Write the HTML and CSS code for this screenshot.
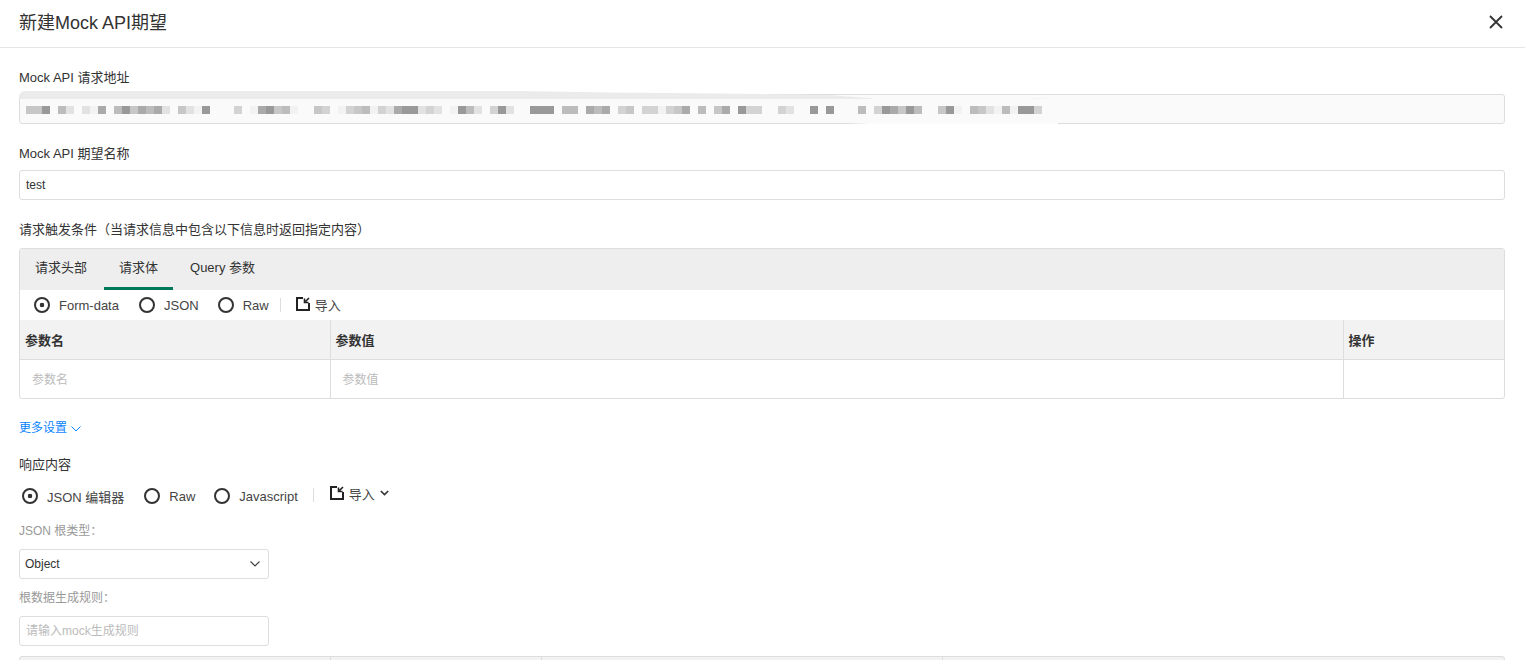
FILE: index.html
```html
<!DOCTYPE html>
<html lang="zh-CN">
<head>
    <meta charset="UTF-8">
    <meta name="viewport" content="width=device-width, initial-scale=1.0">
    <title>新建Mock API期望</title>
    <link rel="stylesheet" href="styles.css">
</head>
<body>
    <header class="modal-header">
        <h1 class="modal-title">新建Mock API期望</h1>
        <svg class="close-icon" width="14" height="14" viewBox="0 0 14 14"><path d="M1 1l12 12M13 1L1 13"/></svg>
    </header>

    <main class="modal-body">
        <label class="field-label">Mock API 请求地址</label>
        <div class="url-box">
            <div class="mosaic">
                <i class="d"></i><i class="d"></i><i class="g"></i><i></i><i class="e"></i><i class="b"></i><i></i><i class="b"></i><i class="a"></i><i class="f"></i><i></i><i class="e"></i><i class="g"></i><i class="d"></i><i class="f"></i><i class="e"></i><i class="f"></i><i class="b"></i><i></i><i class="d"></i><i class="b"></i><i class="a"></i><i class="g"></i><i></i><i></i><i></i><i class="c"></i><i></i><i class="a"></i><i class="f"></i><i class="g"></i><i class="d"></i><i class="e"></i><i class="a"></i><i></i><i></i>
                <i class="d"></i><i class="c"></i><i></i><i class="a"></i><i class="c"></i><i class="d"></i><i class="e"></i><i class="a"></i><i class="c"></i><i class="b"></i><i class="f"></i><i class="g"></i><i class="g"></i><i class="b"></i><i class="c"></i><i class="b"></i><i></i><i class="a"></i><i class="g"></i><i class="e"></i><i class="b"></i><i></i><i class="c"></i><i class="g"></i><i class="b"></i><i></i><i></i><i class="g"></i><i class="g"></i><i class="g"></i><i></i>
                <i class="e"></i><i class="e"></i><i></i><i class="f"></i><i class="e"></i><i class="f"></i><i></i><i class="c"></i><i class="d"></i><i></i><i class="c"></i><i class="c"></i><i class="a"></i><i class="c"></i><i class="d"></i><i class="f"></i><i></i><i class="e"></i><i></i><i class="d"></i><i class="f"></i><i></i><i class="g"></i><i class="c"></i><i class="c"></i><i></i><i></i><i class="c"></i><i class="b"></i><i></i><i></i><i class="g"></i><i></i><i class="g"></i>
                <i></i><i></i><i></i><i class="e"></i><i></i><i class="c"></i><i class="g"></i><i class="f"></i><i class="d"></i><i class="g"></i><i class="e"></i><i></i><i></i><i class="d"></i><i class="g"></i><i class="a"></i><i></i><i class="e"></i><i class="d"></i><i class="b"></i><i class="a"></i><i class="e"></i><i class="a"></i><i class="g"></i><i class="g"></i><i class="c"></i>
            </div>
            <svg class="url-smear" width="1100" height="36" viewBox="0 0 1100 36">
                <path class="smear-band" d="M0 9Q0 1 6 1H500L590 2.500 700 3.500 810 5 854 8.500V9Z"/>
                <path class="smear-white" d="M818 34.500H1039V33H850Z"/>
                <path class="smear-faint" d="M1008 8.500Q1018 7.500 1029 8.500Q1018 9 1008 8.500Z"/>
            </svg>
        </div>

        <label class="field-label">Mock API 期望名称</label>
        <input class="text-input" type="text" value="test">

        <label class="field-label panel-label">请求触发条件（当请求信息中包含以下信息时返回指定内容）</label>
        <section class="panel">
            <nav class="tabs">
                <a class="tab">请求头部</a>
                <a class="tab active">请求体</a>
                <a class="tab">Query 参数</a>
            </nav>
            <div class="radio-row">
                <span class="radio checked">Form-data</span>
                <span class="radio">JSON</span>
                <span class="radio">Raw</span>
                <span class="divider"></span>
                <span class="import">
                    <svg class="import-icon" width="14" height="14" viewBox="0 0 14 14"><path d="M7 1H1v12h12V6"/><path class="arrow" d="M8.500 1.500v4h4M9.500 4.500L13 1"/></svg>
                    导入
                </span>
            </div>
            <table class="params">
                <thead>
                    <tr><th class="col-name">参数名</th><th>参数值</th><th class="col-op">操作</th></tr>
                </thead>
                <tbody>
                    <tr><td class="ph">参数名</td><td class="ph">参数值</td><td></td></tr>
                </tbody>
            </table>
        </section>

        <a class="more-link">更多设置
            <svg width="10" height="6" viewBox="0 0 10 6"><path d="M.5.500L5 5 9.500.500"/></svg>
        </a>

        <label class="field-label response-label">响应内容</label>
        <div class="radio-row response-row">
            <span class="radio checked">JSON 编辑器</span>
            <span class="radio">Raw</span>
            <span class="radio">Javascript</span>
            <span class="divider"></span>
            <span class="import import-menu">
                <svg class="import-icon" width="14" height="14" viewBox="0 0 14 14"><path d="M7 1H1v12h12V6"/><path class="arrow" d="M8.500 1.500v4h4M9.500 4.500L13 1"/></svg>
                导入
                <svg class="menu-caret" width="9" height="6" viewBox="0 0 9 6"><path d="M.8 1L4.500 4.600 8.200 1"/></svg>
            </span>
        </div>

        <label class="sub-label">JSON 根类型：</label>
        <div class="select-box">
            Object
            <svg width="10" height="6" viewBox="0 0 10 6"><path d="M.5.500L5 5 9.500.500"/></svg>
        </div>

        <label class="sub-label">根数据生成规则：</label>
        <input class="text-input rule-input" type="text" placeholder="请输入mock生成规则">

        <div class="next-table">
            <span></span><span></span><span></span><span></span>
        </div>
    </main>
</body>
</html>
```

FILE: styles.css
```css
html, body {
    height: 100%;
    overflow: hidden;
}

body {
    margin: 0;
    background-color: #fff;
    color: #333;
    font-family: "Liberation Sans", "Noto Sans CJK SC", sans-serif;
    font-size: 13px;
}

.modal-header {
    display: flex;
    justify-content: space-between;
    align-items: center;
    height: 48px;
    padding: 0 22px 3px 19px;
    box-sizing: border-box;
    border-bottom: 1px solid #e5e5e5;
}

.modal-title {
    margin: 0 0 2px;
    font-size: 18px;
    font-weight: normal;
    color: #333;
}

.close-icon {
    fill: none;
    stroke: #333;
    stroke-width: 1.8;
}

.modal-body {
    padding: 21px 20px 0 19px;
}

.field-label {
    display: block;
    height: 17px;
    line-height: 17px;
    margin-bottom: 8px;
}

.panel-label {
    margin-bottom: 10px;
}

.url-box {
    position: relative;
    height: 30px;
    box-sizing: border-box;
    border: 1px solid #ddd;
    border-radius: 3px;
    background-color: #fafafa;
    margin-bottom: 21px;
}

.mosaic {
    display: flex;
    padding: 11px 0 0 6px;
}

.mosaic i {
    flex: none;
    width: 8px;
    height: 8px;
}

.mosaic .a { background-color: #f2f2f2; }
.mosaic .b { background-color: #e2e2e2; }
.mosaic .c { background-color: #d3d3d3; }
.mosaic .d { background-color: #c7c7c7; }
.mosaic .e { background-color: #bcbcbc; }
.mosaic .f { background-color: #aaa; }
.mosaic .g { background-color: #999; }

.url-smear {
    position: absolute;
    left: -1px;
    top: -5px;
}

.smear-band { fill: #ebebeb; }
.smear-white { fill: #fdfdfd; }
.smear-faint { fill: #f0f0f0; }

.text-input {
    display: block;
    width: 100%;
    height: 30px;
    padding: 0 6px;
    box-sizing: border-box;
    border: 1px solid #ddd;
    border-radius: 3px;
    background-color: #fff;
    color: #333;
    font-family: inherit;
    font-size: 12px;
    margin-bottom: 21px;
}

.text-input::placeholder {
    color: #bbb;
}

.panel {
    border: 1px solid #ddd;
    border-radius: 3px;
    margin-bottom: 21px;
}

.tabs {
    display: flex;
    height: 41px;
    background-color: #eee;
}

.tab {
    height: 41px;
    line-height: 38px;
    padding: 0 17px 0 15px;
    box-sizing: border-box;
}

.tab.active {
    padding: 0 15px;
    border-bottom: 3px solid #00795b;
}

.tab:last-child {
    padding: 0 16px 0 17px;
}

.radio-row {
    display: flex;
    align-items: center;
    height: 30px;
    padding-left: 14px;
    color: #444;
}

.radio {
    display: flex;
    align-items: center;
    margin-right: 19px;
}

.radio.checked {
    margin-right: 20px;
}

.radio::before {
    content: "";
    flex: none;
    width: 12px;
    height: 12px;
    border: 2px solid #333;
    border-radius: 50%;
    margin-right: 9px;
}

.radio.checked::before {
    background: radial-gradient(circle, #333 0, #333 2px, #fff 2.6px);
}

.divider {
    width: 1px;
    height: 14px;
    background-color: #ddd;
    margin: 0 15px 0 -8px;
}

.import {
    display: flex;
    align-items: center;
    gap: 5px;
    margin-top: -2px;
}

.import-icon {
    fill: none;
    stroke: #222;
    stroke-width: 2;
}

.import-icon .arrow {
    stroke-width: 1.6;
}

.params {
    width: 100%;
    table-layout: fixed;
    border-collapse: collapse;
}

.params th, .params td {
    height: 39px;
    box-sizing: border-box;
    text-align: left;
    border-left: 1px solid #ddd;
    font-size: 13px;
}

.params th:first-child, .params td:first-child {
    border-left: none;
}

.params th {
    padding: 0 5px;
    background-color: #f2f2f2;
    border-bottom: 1px solid #ddd;
}

.params td.ph {
    padding: 0 12px;
    color: #bbb;
    font-size: 12px;
}

.col-name {
    width: 310px;
}

.col-op {
    width: 161px;
}

.more-link {
    display: flex;
    align-items: center;
    gap: 4px;
    height: 17px;
    line-height: 17px;
    color: #0a84ff;
    font-size: 12px;
    margin-bottom: 19px;
}

.more-link svg {
    fill: none;
    stroke: #0a84ff;
}

.response-label {
    margin-bottom: 7px;
}

.response-row {
    padding-left: 3px;
    height: 32px;
    margin-bottom: 11px;
}

.response-row .divider {
    margin-top: -2px;
    margin-left: -4px;
    margin-right: 16px;
}

.import-menu {
    margin-top: -6px;
}

.menu-caret {
    fill: none;
    stroke: #333;
    stroke-width: 1.6;
}

.sub-label {
    display: block;
    height: 17px;
    line-height: 17px;
    color: #999;
    font-size: 12px;
    margin-bottom: 9px;
}

.select-box {
    display: flex;
    justify-content: space-between;
    align-items: center;
    width: 250px;
    height: 30px;
    padding: 0 8px 0 5px;
    box-sizing: border-box;
    border: 1px solid #ddd;
    border-radius: 3px;
    font-size: 12px;
    margin-bottom: 11px;
}

.select-box svg {
    fill: none;
    stroke: #444;
    stroke-width: 1.2;
}

.rule-input {
    width: 250px;
    margin-bottom: 10px;
}

.next-table {
    display: grid;
    grid-template-columns: 310px 211px 401px 1fr;
    height: 30px;
    border: 1px solid #ddd;
    border-radius: 3px 3px 0 0;
    background-color: #f2f2f2;
}

.next-table span {
    border-left: 1px solid #ddd;
}

.next-table span:first-child {
    border-left: none;
}
```
